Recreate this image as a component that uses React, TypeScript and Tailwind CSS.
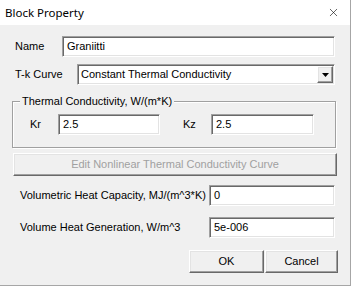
import { X } from 'lucide-react'

const sunken =
  'border border-t-[#a0a0a0] border-l-[#a0a0a0] border-b-white border-r-white bg-white shadow-[inset_1px_1px_0_#696969,inset_-1px_-1px_0_#e3e3e3]'

const raised =
  'border border-t-white border-l-white border-b-[#696969] border-r-[#696969] bg-[#f0f0f0] shadow-[inset_-1px_-1px_0_#a0a0a0,inset_1px_1px_0_#e3e3e3]'

function Field({ value, className }: { value: string; className: string }) {
  return (
    <div className={`${sunken} ${className} flex h-[21px] items-center pl-[4px] text-[11px] text-black`}>
      {value}
    </div>
  )
}

export default function App() {
  return (
    <div className="h-[287px] w-[352px] bg-white" style={{ fontFamily: '"Liberation Sans", Arial, sans-serif' }}>
      <div className="flex h-[286px] w-[351px] flex-col border-r border-b border-[#a6a6a6]">
        {/* title bar */}
        <div className="flex h-[25px] shrink-0 items-center justify-between bg-white pl-[5px] pr-[10px]">
          <span className="text-[11.5px] text-black" style={{ fontFamily: '"Noto Sans", sans-serif' }}>
            Block Property
          </span>
          <X className="h-[13px] w-[13px] text-black" strokeWidth={1.1} aria-hidden="true" />
        </div>

        <div className="flex flex-1 flex-col bg-[#f0f0f0] pl-[12px] text-[11px] text-black">
          <div className="mt-[11px] flex items-center">
            <span className="w-[50px] pl-[3px]">Name</span>
            <Field value="Graniitti" className="w-[273px]" />
          </div>

          <div className="mt-[7px] flex items-center">
            <span className="w-[65px] pl-[3px]">T-k Curve</span>
            <div className={`${sunken} flex h-[21px] w-[258px] items-center justify-between pl-[3px] pr-[1px]`}>
              <span>Constant Thermal Conductivity</span>
              <div className={`${raised} flex h-[17px] w-[16px] items-center justify-center`}>
                <svg width="7" height="4" viewBox="0 0 7 4" aria-hidden="true">
                  <path d="M0 0h7L3.5 4z" fill="#000" />
                </svg>
              </div>
            </div>
          </div>

          <div className="relative mt-[16px] h-[47px] w-[324px] border border-[#a0a0a0] shadow-[1px_1px_0_white,inset_1px_1px_0_white]">
            <span className="absolute -top-[8px] left-[7px] bg-[#f0f0f0] px-[2px] leading-[14px]">
              Thermal Conductivity, W/(m*K)
            </span>
            <div className="mt-[12px] flex items-center">
              <span className="w-[45px] pl-[17px]">Kr</span>
              <Field value="2.5" className="w-[102px]" />
              <span className="ml-[23px] w-[28px]">Kz</span>
              <Field value="2.5" className="w-[103px]" />
            </div>
          </div>

          <div className={`${raised} mt-[5px] ml-[1px] flex h-[23px] w-[324px] items-center justify-center text-[#a0a0a0]`}>
            Edit Nonlinear Thermal Conductivity Curve
          </div>

          <div className="mt-[9px] flex items-center">
            <span className="w-[197px] pl-[8px]">Volumetric Heat Capacity, MJ/(m^3*K)</span>
            <Field value="0" className="w-[126px]" />
          </div>

          <div className="mt-[11px] flex items-center">
            <span className="w-[197px] pl-[8px]">Volume Heat Generation, W/m^3</span>
            <Field value="5e-006" className="w-[126px]" />
          </div>

          <div className="mt-[12px] flex pl-[177px]">
            <div className={`${raised} flex h-[23px] w-[75px] items-center justify-center`}>OK</div>
            <div className={`${raised} ml-[1px] flex h-[23px] w-[73px] items-center justify-center`}>Cancel</div>
          </div>
        </div>
      </div>
    </div>
  )
}
